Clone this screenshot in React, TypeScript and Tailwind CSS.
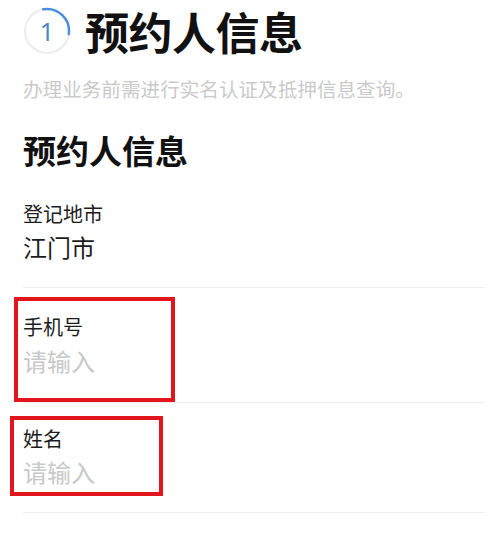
import React from "react";

function StepCircle() {
  return (
    <div className="relative w-[48px] h-[48px] shrink-0">
      <svg width="48" height="48" viewBox="0 0 48 48" className="absolute inset-0">
        <circle cx="24" cy="24" r="22" fill="none" stroke="#ececec" strokeWidth="2" />
        <path d="M20.18 2.33 A22 22 0 0 1 45.79 27.06" fill="none" stroke="#4a8fdc" strokeWidth="2.5" strokeLinecap="round" />
      </svg>
      <div className="absolute inset-0 flex items-center justify-center text-[25px] leading-none font-normal text-[#4f84c4] [font-family:'Noto_Sans',sans-serif]">
        1
      </div>
    </div>
  );
}

export default function App() {
  return (
    <div className="relative w-[500px] h-[538px] bg-white overflow-hidden [font-family:'Noto_Sans_CJK_SC','Noto_Sans',sans-serif]">
      <div className="flex items-center h-[62px] pl-[23px] gap-[14px]">
        <StepCircle />
        <h1 className="text-[44px] leading-none font-bold text-[#111] tracking-[-0.5px]">预约人信息</h1>
      </div>
      <p className="mt-[13px] pl-[23px] text-[19.6px] leading-[28px] text-[#cacaca]">
        办理业务前需进行实名认证及抵押信息查询。
      </p>
      <h2 className="mt-[27px] pl-[23px] text-[33px] leading-[40px] font-bold text-[#111]">预约人信息</h2>

      <div className="ml-[23px] mr-[15px] border-b border-[#efefef] pt-[29.5px] pb-[24px]">
        <div className="text-[20px] leading-[28px] text-[#1c1c1c]">登记地市</div>
        <div className="mt-[3.5px] text-[24px] leading-[32px] text-[#1c1c1c]">江门市</div>
      </div>

      <div className="ml-[23px] mr-[15px] border-b border-[#efefef] pt-[24.5px] pb-[25px]">
        <div className="text-[20px] leading-[28px] text-[#1c1c1c]">手机号</div>
        <div className="mt-[4px] text-[24px] leading-[32px] text-[#c8c8c8]">请输入</div>
      </div>

      <div className="ml-[23px] mr-[15px] border-b border-[#efefef] pt-[22px] pb-[24px]">
        <div className="text-[20px] leading-[28px] text-[#1c1c1c]">姓名</div>
        <div className="mt-[3px] text-[24px] leading-[32px] text-[#c8c8c8]">请输入</div>
      </div>

      <div className="absolute left-[14px] top-[297px] w-[161px] h-[105px] border-[4px] border-[#e2151d]" />
      <div className="absolute left-[10px] top-[416px] w-[153px] h-[80px] border-[4px] border-[#e2151d]" />
    </div>
  );
}
